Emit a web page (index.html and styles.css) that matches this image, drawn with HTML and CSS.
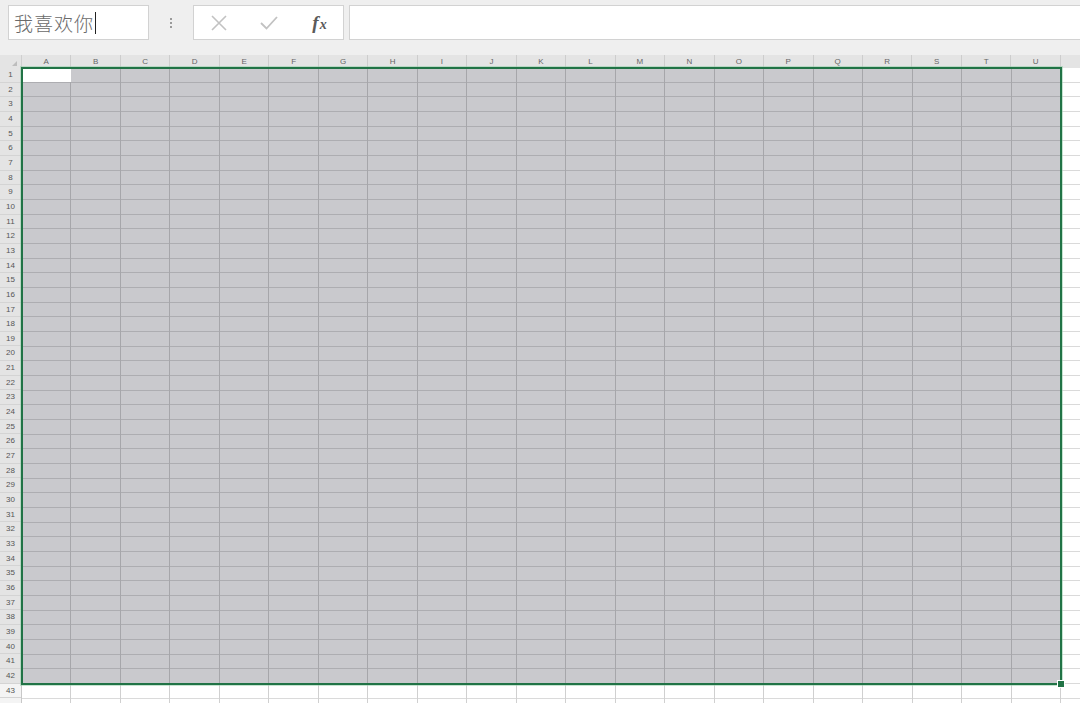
FILE: index.html
```html
<!DOCTYPE html>
<html lang="zh">
<head>
<meta charset="utf-8">
<title>Sheet</title>
<link rel="stylesheet" href="styles.css">
</head>
<body>
<div class="toolbar">
  <div class="namebox"><span class="nametext">我喜欢你</span><span class="caret"></span></div>
  <div class="grip"><span></span><span></span><span></span></div>
  <div class="buttons">
    <span class="btn">
      <svg width="18" height="18" viewBox="0 0 18 18"><path d="M2 2 L16 16 M16 2 L2 16" stroke="#c2c2c2" stroke-width="1.6" fill="none"/></svg>
    </span>
    <span class="btn">
      <svg width="20" height="18" viewBox="0 0 20 18"><path d="M2 9 L7.5 14.5 L18 3" stroke="#c2c2c2" stroke-width="1.8" fill="none"/></svg>
    </span>
    <span class="btn fx"><i>f</i><i class="x">x</i></span>
  </div>
  <div class="formula"></div>
</div>

<div class="sheet">
  <div class="corner"><span class="tri"></span></div>
  <div class="colheads">
    <div class="ch">A</div><div class="ch">B</div><div class="ch">C</div><div class="ch">D</div><div class="ch">E</div><div class="ch">F</div><div class="ch">G</div><div class="ch">H</div><div class="ch">I</div><div class="ch">J</div><div class="ch">K</div><div class="ch">L</div><div class="ch">M</div><div class="ch">N</div><div class="ch">O</div><div class="ch">P</div><div class="ch">Q</div><div class="ch">R</div><div class="ch">S</div><div class="ch">T</div><div class="ch">U</div><div class="ch rest"></div>
  </div>
  <div class="rowheads">
    <div class="rh">1</div><div class="rh">2</div><div class="rh">3</div><div class="rh">4</div><div class="rh">5</div><div class="rh">6</div><div class="rh">7</div><div class="rh">8</div><div class="rh">9</div><div class="rh">10</div>
    <div class="rh">11</div><div class="rh">12</div><div class="rh">13</div><div class="rh">14</div><div class="rh">15</div><div class="rh">16</div><div class="rh">17</div><div class="rh">18</div><div class="rh">19</div><div class="rh">20</div>
    <div class="rh">21</div><div class="rh">22</div><div class="rh">23</div><div class="rh">24</div><div class="rh">25</div><div class="rh">26</div><div class="rh">27</div><div class="rh">28</div><div class="rh">29</div><div class="rh">30</div>
    <div class="rh">31</div><div class="rh">32</div><div class="rh">33</div><div class="rh">34</div><div class="rh">35</div><div class="rh">36</div><div class="rh">37</div><div class="rh">38</div><div class="rh">39</div><div class="rh">40</div>
    <div class="rh">41</div><div class="rh">42</div><div class="rh out">43</div><div class="rh out"></div>
  </div>
  <div class="cells">
    <div class="selection">
      <div class="active"></div>
      <span class="handle"></span>
    </div>
  </div>
</div>
</body>
</html>
```
FILE: styles.css
```css
html, body {
  margin: 0;
  padding: 0;
  width: 1080px;
  height: 703px;
  overflow: hidden;
  background: #efefef;
  font-family: "Liberation Sans", Arial, sans-serif;
}

.toolbar {
  display: flex;
  align-items: stretch;
  height: 35px;
  padding: 5px 0 0 8px;
}

.namebox {
  width: 141px;
  background: #fff;
  border: 1px solid #d2d2d2;
  display: flex;
  align-items: center;
  padding-left: 5px;
  box-sizing: border-box;
}
.nametext {
  font-family: "Noto Sans CJK SC", sans-serif;
  font-weight: 300;
  font-size: 19px;
  color: #6a6a6a;
  letter-spacing: 1px;
}
.caret {
  display: inline-block;
  width: 1px;
  height: 22px;
  background: #222;
  margin-left: 1px;
}

.grip {
  width: 44px;
  display: flex;
  flex-direction: column;
  align-items: center;
  justify-content: center;
  gap: 2px;
}
.grip span {
  width: 2px;
  height: 2px;
  background: #9a9a9a;
}

.buttons {
  width: 151px;
  background: #fff;
  border: 1px solid #d2d2d2;
  box-sizing: border-box;
  display: flex;
  align-items: center;
  padding-left: 14px;
  gap: 29px;
}
.btn {
  display: flex;
  align-items: center;
  justify-content: center;
  width: 21px;
  height: 20px;
}
.fx {
  font-family: "Liberation Serif", serif;
  font-size: 19px;
  color: #5a5a5a;
  font-weight: bold;
  margin-left: 1px;
}
.fx i { font-style: italic; }
.fx .x { font-size: 14px; margin-left: 1px; margin-top: 5px; }

.formula {
  flex: 1;
  margin-left: 5px;
  background: #fff;
  border: 1px solid #d2d2d2;
  border-right: none;
}

.sheet {
  margin-top: 15px;
  display: grid;
  grid-template-columns: 22px 1fr;
  grid-template-rows: 13px 1fr;
  height: 648px;
}

.corner {
  background: #e4e4e4;
  border-right: 1px solid #cfcfcf;
  position: relative;
}
.tri {
  position: absolute;
  right: 4px;
  bottom: 2px;
  width: 0;
  height: 0;
  border-left: 5px solid transparent;
  border-bottom: 5px solid #bdbdbd;
}

.colheads {
  display: flex;
  background: #e4e4e4;
}
.ch {
  flex: 0 0 49.476px;
  box-sizing: border-box;
  border-right: 1px solid #cdcdcd;
  font-size: 8px;
  line-height: 13px;
  color: #666;
  text-align: center;
}
.ch.rest { flex: 1; border-right: none; }

.rowheads {
  display: flex;
  flex-direction: column;
  background: #e4e4e4;
  border-right: 1px solid #c8c8c8;
}
.rh {
  flex: 0 0 14.667px;
  font-size: 8px;
  line-height: 14px;
  color: #555;
  text-align: center;
  box-shadow: inset 0 -1px 0 #d4d4d4;
}
.rh.out { background: #f4f4f4; }

.cells {
  position: relative;
  background-color: #fff;
  background-image:
    repeating-linear-gradient(to right, transparent 0 48.476px, #d0d0d0 48.476px 49.476px),
    repeating-linear-gradient(to bottom, transparent 0 13.667px, #dadada 13.667px 14.667px);
}

.selection {
  position: absolute;
  left: -1px;
  top: -1px;
  width: 1041px;
  height: 618px;
  box-sizing: border-box;
  border: 2px solid #217346;
  background: rgba(40, 40, 55, 0.25);
  box-shadow: 0 0 0 1px rgba(150, 205, 170, 0.55);
}
.active {
  width: 48px;
  height: 13px;
  background: #fff;
}
.handle {
  position: absolute;
  right: -5px;
  bottom: -5px;
  width: 6px;
  height: 6px;
  background: #217346;
  border: 1px solid #fff;
}
```
